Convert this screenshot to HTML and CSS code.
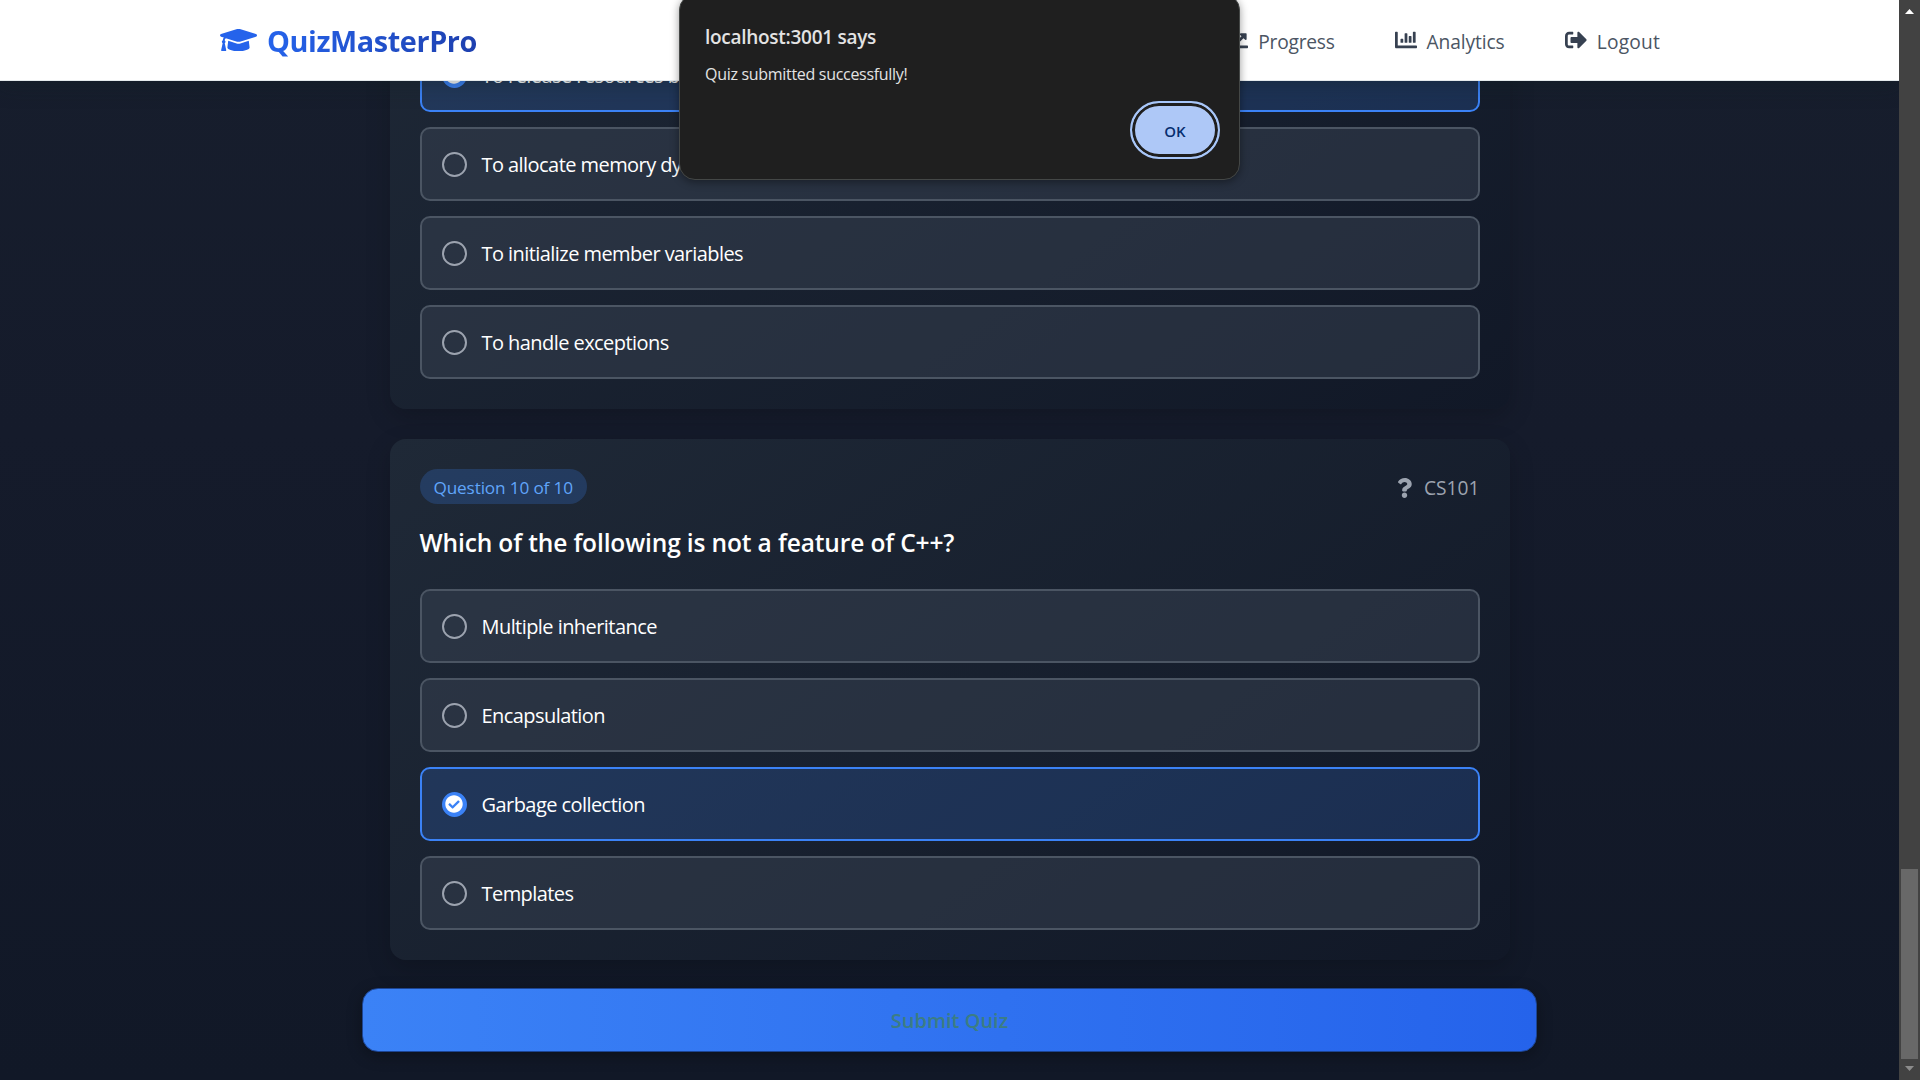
FILE: index.html
```html
<!DOCTYPE html>
<html lang="en">
<head>
<meta charset="utf-8">
<title>QuizMasterPro</title>
<link rel="stylesheet" href="styles.css">
</head>
<body>
<div class="viewport">
  <div class="page">
    <header class="navbar">
      <a class="brand">
        <svg class="brand-icon" viewBox="0 0 640 512"><path d="M622.34 153.2L343.4 67.5c-15.2-4.67-31.6-4.67-46.79 0L17.66 153.2c-23.54 7.23-23.54 38.36 0 45.59l48.63 14.94c-10.67 13.19-17.23 29.28-17.88 46.9C38.78 266.15 32 276.11 32 288c0 10.78 5.68 19.85 13.86 25.65L20.33 428.53C18.11 438.52 25.71 448 35.94 448h56.11c10.24 0 17.84-9.48 15.62-19.47L82.14 313.65C90.32 307.85 96 298.78 96 288c0-11.57-6.47-21.25-15.66-26.87.76-15.02 8.44-28.3 20.69-36.72L296.6 284.5c9.06 2.78 26.44 6.25 46.79 0l278.95-85.7c23.55-7.24 23.55-38.36 0-45.6zM352.79 315.09c-28.53 8.76-52.84 3.92-65.59 0l-145.02-44.55L128 384c0 35.35 85.96 64 192 64s192-28.65 192-64l-14.18-113.47-145.03 44.56z"/></svg>
        <span class="brand-name">QuizMasterPro</span>
      </a>
      <nav class="menu">
        <a class="menu-item"><svg viewBox="0 0 512 512"><path d="M496 384H64V80c0-8.84-7.16-16-16-16H16C7.16 64 0 71.16 0 80v336c0 17.67 14.33 32 32 32h464c8.84 0 16-7.16 16-16v-32c0-8.84-7.16-16-16-16zM464 96H345.94c-21.38 0-32.09 25.85-16.97 40.97l32.4 32.4L288 242.75l-73.37-73.37c-12.5-12.5-32.76-12.5-45.25 0l-68.69 68.69c-6.25 6.25-6.25 16.38 0 22.63l22.62 22.62c6.25 6.25 16.38 6.25 22.63 0L192 237.25l73.37 73.37c12.5 12.5 32.76 12.5 45.25 0l96-96 32.4 32.4c15.12 15.12 40.97 4.41 40.97-16.97V112c.01-8.84-7.15-16-15.99-16z"/></svg><span class="menu-label tight">Progress</span></a>
        <a class="menu-item"><svg viewBox="0 0 512 512"><path d="M332.8 320h38.4c6.4 0 12.8-6.4 12.8-12.8V172.8c0-6.4-6.4-12.8-12.8-12.8h-38.4c-6.4 0-12.8 6.4-12.8 12.8v134.4c0 6.4 6.4 12.8 12.8 12.8zm96 0h38.4c6.4 0 12.8-6.4 12.8-12.8V76.8c0-6.4-6.4-12.8-12.8-12.8h-38.4c-6.4 0-12.8 6.4-12.8 12.8v230.4c0 6.4 6.4 12.8 12.8 12.8zm-288 0h38.4c6.4 0 12.8-6.4 12.8-12.8v-70.4c0-6.4-6.4-12.8-12.8-12.8h-38.4c-6.4 0-12.8 6.4-12.8 12.8v70.4c0 6.4 6.4 12.8 12.8 12.8zm96 0h38.4c6.4 0 12.8-6.4 12.8-12.8V108.8c0-6.4-6.4-12.8-12.8-12.8h-38.4c-6.4 0-12.8 6.4-12.8 12.8v198.4c0 6.4 6.4 12.8 12.8 12.8zM496 384H64V80c0-8.84-7.16-16-16-16H16C7.16 64 0 71.16 0 80v336c0 17.67 14.33 32 32 32h464c8.84 0 16-7.16 16-16v-32c0-8.84-7.16-16-16-16z"/></svg><span class="menu-label">Analytics</span></a>
        <a class="menu-item"><svg viewBox="0 0 512 512"><path d="M497 273L329 441c-15 15-41 4.5-41-17v-96H152c-13.3 0-24-10.7-24-24v-96c0-13.3 10.7-24 24-24h136V88c0-21.4 25.9-32 41-17l168 168c9.3 9.4 9.3 24.6 0 34zM192 436v-40c0-6.6-5.4-12-12-12H96c-17.7 0-32-14.3-32-32V160c0-17.7 14.3-32 32-32h84c6.6 0 12-5.4 12-12V76c0-6.6-5.4-12-12-12H96c-53 0-96 43-96 96v192c0 53 43 96 96 96h84c6.6 0 12-5.4 12-12z"/></svg><span class="menu-label wide">Logout</span></a>
      </nav>
    </header>
    <main class="quiz">
      <section class="card card-previous">
        <div class="option selected"><span class="radio"><svg viewBox="0 0 512 512"><path d="M504 256c0 136.967-111.033 248-248 248S8 392.967 8 256 119.033 8 256 8s248 111.033 248 248zM227.314 387.314l184-184c6.248-6.248 6.248-16.379 0-22.627l-22.627-22.627c-6.248-6.249-16.379-6.249-22.628 0L216 308.118l-70.059-70.059c-6.248-6.248-16.379-6.248-22.628 0l-22.627 22.627c-6.248 6.248-6.248 16.379 0 22.627l104 104c6.249 6.249 16.379 6.249 22.628.001z"/></svg></span><span class="label">To release resources before an object is destroyed</span></div>
        <div class="option"><span class="radio"></span><span class="label">To allocate memory dynamically</span></div>
        <div class="option"><span class="radio"></span><span class="label">To initialize member variables</span></div>
        <div class="option"><span class="radio"></span><span class="label">To handle exceptions</span></div>
      </section>
      <section class="card card-current">
        <div class="card-head">
          <span class="badge">Question 10 of 10</span>
          <span class="course"><svg viewBox="0 0 384 512"><path d="M202.021 0C122.202 0 70.503 32.703 29.914 91.026c-7.363 10.58-5.093 25.086 5.178 32.874l43.138 32.709c10.373 7.865 25.132 6.026 33.253-4.148 25.049-31.381 43.63-49.449 82.757-49.449 30.764 0 68.816 19.799 68.816 49.631 0 22.552-18.617 34.134-48.993 51.164-35.423 19.86-82.299 44.576-82.299 106.405V320c0 13.255 10.745 24 24 24h72.471c13.255 0 24-10.745 24-24v-5.773c0-42.86 125.268-44.645 125.268-160.627C377.504 66.256 286.902 0 202.021 0zM192 373.459c-38.196 0-69.271 31.075-69.271 69.271 0 38.195 31.075 69.27 69.271 69.27s69.271-31.075 69.271-69.271-31.075-69.27-69.271-69.27z"/></svg><span>CS101</span></span>
        </div>
        <h2 class="question">Which of the following is not a feature of C++?</h2>
        <div class="option"><span class="radio"></span><span class="label">Multiple inheritance</span></div>
        <div class="option"><span class="radio"></span><span class="label">Encapsulation</span></div>
        <div class="option selected"><span class="radio"><svg viewBox="0 0 512 512"><path d="M504 256c0 136.967-111.033 248-248 248S8 392.967 8 256 119.033 8 256 8s248 111.033 248 248zM227.314 387.314l184-184c6.248-6.248 6.248-16.379 0-22.627l-22.627-22.627c-6.248-6.249-16.379-6.249-22.628 0L216 308.118l-70.059-70.059c-6.248-6.248-16.379-6.248-22.628 0l-22.627 22.627c-6.248 6.248-6.248 16.379 0 22.627l104 104c6.249 6.249 16.379 6.249 22.628.001z"/></svg></span><span class="label">Garbage collection</span></div>
        <div class="option"><span class="radio"></span><span class="label">Templates</span></div>
      </section>
      <button class="submit">Submit Quiz</button>
    </main>
  </div>
  <div class="scrollbar">
    <svg class="arrow arrow-up" viewBox="0 0 9 5"><path d="M4.5 0L9 5H0z"/></svg>
    <div class="thumb"></div>
    <svg class="arrow arrow-down" viewBox="0 0 9 5"><path d="M0 0h9L4.5 5z"/></svg>
  </div>
  <div class="dialog">
    <div class="dialog-title">localhost:3001 says</div>
    <div class="dialog-text">Quiz submitted successfully!</div>
    <button class="dialog-ok">OK</button>
  </div>
</div>
</body>
</html>
```
FILE: styles.css
```css
* { box-sizing: border-box; }
body {
  margin: 0;
  overflow: hidden;
  font-family: "Open Sans", "Noto Sans", sans-serif;
}
.viewport {
  position: relative;
  display: flex;
  width: 1920px;
  height: 1080px;
  overflow: hidden;
}
.page {
  flex: 1;
  height: 1080px;
  overflow: hidden;
  background: linear-gradient(180deg, #171e2d 0%, #151b2b 40%, #111827 100%);
}
.navbar {
  position: relative;
  z-index: 2;
  display: flex;
  align-items: center;
  justify-content: space-between;
  height: 81px;
  padding: 0 239px 0 220px;
  background: #fff;
  border-bottom: 1px solid #e5eaec;
  box-shadow: 0 4px 20px rgba(16, 32, 32, 0.35);
}
.brand { display: flex; align-items: center; gap: 10px; }
.brand-icon { width: 37px; height: 30px; fill: #2563eb; }
.brand-name {
  padding-top: 2px;
  font-size: 28.8px;
  line-height: 40px;
  font-weight: 700;
  letter-spacing: -0.4px;
  color: transparent;
  background: linear-gradient(90deg, #2563eb, #1e40af);
  -webkit-background-clip: text;
  background-clip: text;
}
.menu { display: flex; gap: 60px; }
.menu-item {
  display: flex;
  align-items: center;
  gap: 10px;
  font-size: 19.2px;
  color: #4b5563;
}
.menu-item svg { width: 22px; height: 22px; fill: #374151; }
.menu-label { padding-top: 2px; letter-spacing: -0.1px; }
.menu-label.tight { letter-spacing: -0.25px; }
.menu-label.wide { letter-spacing: 0.2px; }
.quiz {
  display: flex;
  flex-direction: column;
  align-items: center;
  margin-top: -43px;
}
.card {
  display: flex;
  flex-direction: column;
  width: 1120px;
  padding: 30px;
  border-radius: 16px;
  box-shadow: 0 8px 24px rgba(0, 0, 0, 0.18);
  background: linear-gradient(145deg, #1f2937, #111827);
}
.card-previous {
  height: 520px;
  margin-top: -149px;
  justify-content: flex-end;
}
.card-current { height: 521px; margin-top: 30px; }
.card-head {
  display: flex;
  align-items: center;
  justify-content: space-between;
  height: 35px;
}
.badge {
  height: 35px;
  padding: 0 14px;
  border-radius: 18px;
  background: rgba(59, 130, 246, 0.22);
  color: #60a5fa;
  font-size: 17.2px;
  line-height: 37px;
  letter-spacing: -0.15px;
}
.course {
  display: flex;
  align-items: center;
  gap: 12px;
  padding-top: 2px;
  color: #9ca3af;
  font-size: 19.2px;
}
.course svg { width: 15px; height: 20px; fill: #9ca3af; }
.question {
  height: 85px;
  margin: 0;
  padding-top: 21px;
  font-size: 24.5px;
  line-height: 36px;
  font-weight: 600;
  letter-spacing: -0.13px;
  color: #fff;
}
.option {
  display: flex;
  flex: none;
  align-items: center;
  gap: 15px;
  height: 74px;
  padding: 0 20px;
  border: 2px solid #4b5563;
  border-radius: 10px;
  background: rgba(55, 65, 81, 0.5);
  color: #fff;
  font-size: 20px;
  letter-spacing: -0.56px;
}
.option + .option { margin-top: 15px; }
.option.selected {
  border-color: #3b82f6;
  background: rgba(59, 130, 246, 0.2);
}
.label { padding-top: 1px; }
.radio {
  display: flex;
  width: 25px;
  height: 25px;
  border: 2px solid #9ca3af;
  border-radius: 50%;
}
.selected .radio { border-color: #3b82f6; background: #3b82f6; }
.radio svg { width: 18px; height: 18px; margin: 1px; fill: #fff; }
.submit {
  width: 1175px;
  height: 64px;
  margin-top: 28px;
  padding: 0;
  border: 1px solid #1d4593;
  border-radius: 16px;
  background: linear-gradient(90deg, #3b82f6, #2563eb);
  box-shadow: 0 4px 15px rgba(0, 0, 0, 0.3);
  color: #3c7d83;
  font-family: inherit;
  font-size: 20px;
  font-weight: 600;
}
.scrollbar {
  display: flex;
  flex-direction: column;
  align-items: center;
  justify-content: space-between;
  width: 21px;
  height: 1080px;
  padding: 9px 0;
  background: #424242;
}
.arrow { width: 9px; height: 5px; fill: #fff; }
.arrow-down { fill: #8c8c8c; }
.thumb {
  width: 17px;
  height: 190px;
  margin-top: auto;
  margin-bottom: 7px;
  background: #686868;
}
.dialog {
  position: absolute;
  z-index: 5;
  left: 679px;
  top: -6px;
  display: flex;
  flex-direction: column;
  width: 561px;
  height: 186px;
  padding: 28px 19px 20px 25px;
  border: 1px solid #444746;
  border-radius: 16px;
  background: #1f1f1f;
  box-shadow: 0 2px 8px rgba(0, 0, 0, 0.4);
  color: #e3e3e3;
}
.dialog-title { font-size: 19px; line-height: 28px; font-weight: 600; letter-spacing: -0.28px; }
.dialog-text { margin-top: 12px; font-size: 16px; line-height: 22px; letter-spacing: -0.3px; }
.dialog-ok {
  align-self: flex-end;
  width: 90px;
  height: 58px;
  margin-top: 16px;
  padding: 1px 0 0;
  border: 2px solid #a8c7fa;
  border-radius: 29px;
  background: #aec8f7;
  box-shadow: inset 0 0 0 3px #1f1f1f;
  color: #062e6f;
  font-family: inherit;
  font-size: 15px;
  font-weight: 600;
}
```
